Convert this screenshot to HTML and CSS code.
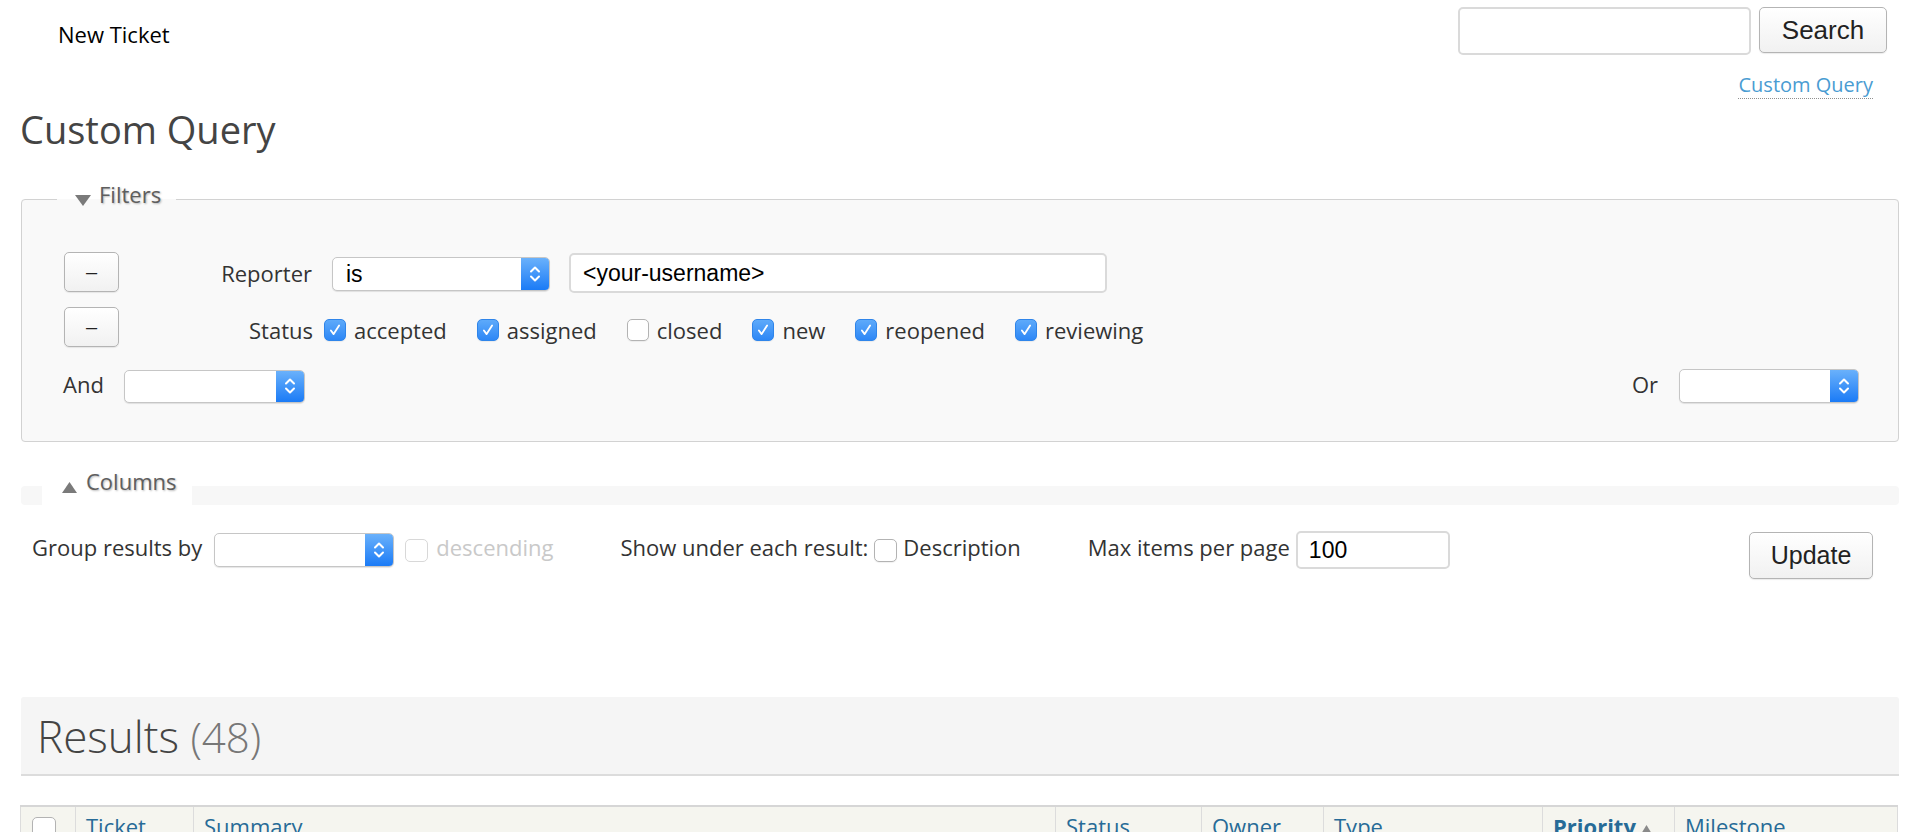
FILE: index.html
```html
<!DOCTYPE html>
<html lang="en">
<head>
<meta charset="utf-8">
<title>Custom Query</title>
<link rel="stylesheet" href="styles.css">
</head>
<body>
<header class="topbar">
  <nav class="mainnav"><a href="#" class="nav-link">New Ticket</a></nav>
  <form class="search">
    <input type="text" class="txt search-input" aria-label="Search">
    <button type="button" class="btn btn-search">Search</button>
  </form>
</header>
<div class="ctxtnav"><a href="#" class="ctx-link">Custom Query</a></div>

<main class="content">
  <h1 class="page-title">Custom Query</h1>

  <fieldset class="filters">
    <legend class="fs-legend fs-legend-filters"><svg class="tri" width="16" height="11" viewBox="0 0 16 11"><polygon points="0,0 16,0 8,11" fill="#7a7a7a"/></svg>Filters</legend>

    <div class="frow frow-reporter">
      <button type="button" class="btn btn-rm">–</button>
      <span class="flabel">Reporter</span>
      <div class="sel sel-mode">
        <span class="sel-val">is</span>
        <span class="stepper"><svg width="12" height="20" viewBox="0 0 12 20"><path d="M2 7.5 L6 3.5 L10 7.5 M2 12.5 L6 16.5 L10 12.5" fill="none" stroke="#fff" stroke-width="2" stroke-linecap="round" stroke-linejoin="round"/></svg></span>
      </div>
      <input type="text" class="txt txt-user" value="&lt;your-username&gt;">
    </div>

    <div class="frow frow-status">
      <button type="button" class="btn btn-rm">–</button>
      <span class="flabel flabel-status">Status</span>
      <div class="checks">
        <label class="chk"><span class="cb cb-on"><svg width="22" height="22" viewBox="0 0 22 22"><path d="M6.5 11.5 L9.5 15.5 L15.5 6" fill="none" stroke="#fff" stroke-width="2" stroke-linecap="round" stroke-linejoin="round"/></svg></span>accepted</label>
        <label class="chk"><span class="cb cb-on"><svg width="22" height="22" viewBox="0 0 22 22"><path d="M6.5 11.5 L9.5 15.5 L15.5 6" fill="none" stroke="#fff" stroke-width="2" stroke-linecap="round" stroke-linejoin="round"/></svg></span>assigned</label>
        <label class="chk"><span class="cb"></span>closed</label>
        <label class="chk"><span class="cb cb-on"><svg width="22" height="22" viewBox="0 0 22 22"><path d="M6.5 11.5 L9.5 15.5 L15.5 6" fill="none" stroke="#fff" stroke-width="2" stroke-linecap="round" stroke-linejoin="round"/></svg></span>new</label>
        <label class="chk"><span class="cb cb-on"><svg width="22" height="22" viewBox="0 0 22 22"><path d="M6.5 11.5 L9.5 15.5 L15.5 6" fill="none" stroke="#fff" stroke-width="2" stroke-linecap="round" stroke-linejoin="round"/></svg></span>reopened</label>
        <label class="chk"><span class="cb cb-on"><svg width="22" height="22" viewBox="0 0 22 22"><path d="M6.5 11.5 L9.5 15.5 L15.5 6" fill="none" stroke="#fff" stroke-width="2" stroke-linecap="round" stroke-linejoin="round"/></svg></span>reviewing</label>
      </div>
    </div>

    <div class="frow frow-andor">
      <div class="andor">
        <span class="andor-label">And</span>
        <div class="sel sel-and">
          <span class="sel-val"></span>
          <span class="stepper"><svg width="12" height="20" viewBox="0 0 12 20"><path d="M2 7.5 L6 3.5 L10 7.5 M2 12.5 L6 16.5 L10 12.5" fill="none" stroke="#fff" stroke-width="2" stroke-linecap="round" stroke-linejoin="round"/></svg></span>
        </div>
      </div>
      <div class="andor">
        <span class="andor-label">Or</span>
        <div class="sel sel-or">
          <span class="sel-val"></span>
          <span class="stepper"><svg width="12" height="20" viewBox="0 0 12 20"><path d="M2 7.5 L6 3.5 L10 7.5 M2 12.5 L6 16.5 L10 12.5" fill="none" stroke="#fff" stroke-width="2" stroke-linecap="round" stroke-linejoin="round"/></svg></span>
        </div>
      </div>
    </div>
  </fieldset>

  <fieldset class="columns">
    <legend class="fs-legend fs-legend-columns"><svg class="tri" width="15" height="11" viewBox="0 0 15 11"><polygon points="0,11 15,11 7.5,0" fill="#7a7a7a"/></svg>Columns</legend>
  </fieldset>

  <div class="options">
    <span class="opt-label">Group results by</span>
    <div class="sel sel-group">
      <span class="sel-val"></span>
      <span class="stepper"><svg width="12" height="20" viewBox="0 0 12 20"><path d="M2 7.5 L6 3.5 L10 7.5 M2 12.5 L6 16.5 L10 12.5" fill="none" stroke="#fff" stroke-width="2" stroke-linecap="round" stroke-linejoin="round"/></svg></span>
    </div>
    <label class="chk chk-desc"><span class="cb cb-disabled"></span>descending</label>
    <span class="opt-label opt-show">Show under each result:</span>
    <label class="chk chk-descr"><span class="cb cb-small"></span>Description</label>
    <span class="opt-label opt-max">Max items per page</span>
    <input type="text" class="txt txt-max" value="100">
    <button type="button" class="btn btn-update">Update</button>
  </div>

  <div class="results-head">
    <h2 class="results-title">Results <span class="numrows">(48)</span></h2>
  </div>

  <table class="listing">
    <colgroup>
      <col class="c-sel"><col class="c-ticket"><col class="c-summary"><col class="c-status"><col class="c-owner"><col class="c-type"><col class="c-priority"><col class="c-milestone">
    </colgroup>
    <thead>
      <tr>
        <th class="th-sel"><span class="cb cb-head"></span></th>
        <th><a href="#">Ticket</a></th>
        <th><a href="#">Summary</a></th>
        <th><a href="#">Status</a></th>
        <th><a href="#">Owner</a></th>
        <th><a href="#">Type</a></th>
        <th class="th-sorted"><a href="#">Priority</a><svg class="sort-arrow" width="11" height="9" viewBox="0 0 11 9"><polygon points="0,9 11,9 5.5,0" fill="#8a8a8a"/></svg></th>
        <th><a href="#">Milestone</a></th>
      </tr>
    </thead>
  </table>
</main>
</body>
</html>
```

FILE: styles.css
```css
* { box-sizing: border-box; }

html { scrollbar-width: none; }
html::-webkit-scrollbar { width: 0; height: 0; }

body {
  margin: 0;
  background: #fff;
  color: #333;
  font-family: "Open Sans", "Liberation Sans", sans-serif;
  font-size: 22px;
  line-height: 30px;
}

/* ---------- generic controls ---------- */
.btn {
  font-family: "Liberation Sans", Arial, sans-serif;
  color: #222;
  background: linear-gradient(#ffffff, #f1f1f1);
  border: 1px solid #b4b4b4;
  border-radius: 5px;
  box-shadow: 0 1px 1px rgba(0, 0, 0, 0.08);
  padding: 0;
  margin: 0;
  cursor: pointer;
}

.txt {
  font-family: "Liberation Sans", Arial, sans-serif;
  font-size: 23px;
  color: #000;
  background: #fff;
  border: 2px solid #dadada;
  border-radius: 5px;
  margin: 0;
  outline: none;
}

.sel {
  display: flex;
  align-items: stretch;
  background: #fff;
  border: 1px solid #c6c6c6;
  border-radius: 5px;
  box-shadow: 0 1px 1px rgba(0, 0, 0, 0.1);
  overflow: hidden;
  flex: none;
}
.sel-val {
  flex: 1;
  font-family: "Liberation Sans", Arial, sans-serif;
  font-size: 23px;
  color: #000;
  padding-left: 13px;
  display: flex;
  align-items: center;
}
.stepper {
  width: 28px;
  flex: none;
  display: flex;
  align-items: center;
  justify-content: center;
  background: linear-gradient(#6ab1fb, #1b7bf6);
}

.chk {
  display: flex;
  align-items: center;
  white-space: nowrap;
}
.cb {
  width: 22px;
  height: 22px;
  flex: none;
  display: inline-flex;
  align-items: center;
  justify-content: center;
  margin-right: 8px;
  border-radius: 5px;
  background: #fff;
  border: 1px solid #b3b3b3;
  box-shadow: 0 1px 1px rgba(0, 0, 0, 0.06);
}
.cb-on {
  background: linear-gradient(#5eaafa, #2d87f6);
  border-color: #2f85ea;
}
.cb-on svg { display: block; }

/* ---------- top bar ---------- */
.topbar {
  display: flex;
  justify-content: space-between;
  align-items: flex-start;
  padding: 7px 29px 0 58px;
}
.mainnav { margin-top: 12px; }
.nav-link { color: #000; text-decoration: none; }

.search {
  display: flex;
  align-items: flex-start;
  gap: 8px;
  margin: 0;
}
.search-input {
  width: 293px;
  height: 48px;
}
.btn-search {
  width: 128px;
  height: 46px;
  font-size: 26px;
}

.ctxtnav {
  margin-top: 16px;
  text-align: right;
  padding-right: 43px;
  font-size: 20px;
  line-height: 27px;
}
.ctx-link {
  color: #4a9cd2;
  text-decoration: none;
  border-bottom: 1px dotted #8f8f8f;
}

/* ---------- content ---------- */
.content {
  padding: 0 17px 0 21px;
}

.page-title {
  margin: 5px 0 0 -1px;
  font-size: 38px;
  line-height: 52px;
  font-weight: 400;
  color: #444;
}

fieldset { margin: 0; min-width: 0; }

.fs-legend {
  color: #5e5e5e;
  line-height: 30px;
  padding: 0 15px 10px 18px;
  text-shadow: 1px 1px 2px rgba(0, 0, 0, 0.28);
  white-space: nowrap;
}
.fs-legend .tri {
  vertical-align: -3px;
  margin-right: 8px;
}
.fs-legend-filters { margin-left: -7px; }
.fs-legend-columns {
  background: #fff;
  margin-left: 21px;
  padding-left: 20px;
  padding-right: 16px;
  padding-bottom: 9px;
}
.fs-legend-columns .tri { margin-right: 9px; }

.filters {
  margin-top: 24px;
  border: 1px solid #d2d2d2;
  border-radius: 4px;
  background: #f9f9f9;
  padding: 32px 39px 38px 42px;
}

.frow {
  display: flex;
  align-items: center;
}
.frow-reporter { height: 42px; }
.frow-status { height: 40px; margin-top: 14px; }
.frow-andor {
  height: 34px;
  margin-top: 22px;
  justify-content: space-between;
}

.btn-rm {
  width: 55px;
  height: 40px;
  font-size: 20px;
  flex: none;
}

.flabel {
  width: 193px;
  text-align: right;
  flex: none;
  margin-top: 2px;
}
.flabel-status {
  width: 194px;
  margin-top: 6px;
}

.sel-mode {
  width: 218px;
  height: 34px;
  margin-left: 20px;
  margin-top: 3px;
}
.txt-user {
  width: 538px;
  height: 40px;
  margin-left: 19px;
  padding: 0 0 0 12px;
  margin-top: 2px;
}

.checks {
  display: flex;
  align-items: center;
  gap: 30px;
  margin-left: 11px;
  margin-top: 6px;
}

.andor {
  display: flex;
  align-items: center;
}
.andor-label { margin-left: -1px; margin-bottom: 5px; }
.sel-and {
  width: 181px;
  height: 33px;
  margin-left: 20px;
}
.sel-or {
  width: 180px;
  height: 34px;
  margin-left: 21px;
}

.columns {
  margin-top: 24px;
  border: 0;
  padding: 0;
  background: #f7f7f7;
  border-radius: 4px;
}

/* ---------- options row ---------- */
.options {
  display: flex;
  align-items: center;
  height: 38px;
  margin-top: 26px;
  padding: 0 26px 0 11px;
}
.opt-label { white-space: nowrap; margin-bottom: 6px; }
.sel-group {
  width: 180px;
  height: 34px;
  margin-left: 12px;
}
.chk-desc { margin-left: 11px; color: #c9c9c9; margin-bottom: 6px; }
.chk-desc .cb, .chk-descr .cb { margin-top: 6px; }
.cb-disabled {
  width: 23px;
  height: 23px;
  border-color: #d8d8d8;
  box-shadow: none;
  margin-right: 8px;
}
.opt-show { margin-left: 67px; }
.chk-descr { margin-left: 6px; margin-bottom: 6px; }
.cb-small {
  width: 23px;
  height: 23px;
  margin-right: 6px;
}
.opt-max { margin-left: 67px; }
.txt-max {
  width: 154px;
  height: 38px;
  margin-left: 6px;
  padding: 0 0 0 11px;
}
.btn-update {
  margin-left: auto;
  align-self: flex-start;
  margin-top: 1px;
  width: 124px;
  height: 47px;
  font-size: 25px;
}

/* ---------- results ---------- */
.results-head {
  margin-top: 128px;
  background: #f5f5f5;
  border-bottom: 2px solid #dcdcdc;
  border-radius: 3px 3px 0 0;
  padding: 9px 0 7px 16px;
}
.results-title {
  margin: 0;
  font-size: 44px;
  line-height: 60px;
  font-weight: 300;
  color: #444;
}
.numrows { color: #777; font-size: 42px; }

.listing {
  margin: 29px 0 0 -1px;
  width: 1877px;
  border-collapse: collapse;
  table-layout: fixed;
  border: 1px solid #dcdcdc;
  border-top: 2px solid #d6d6d6;
}
.c-sel { width: 55px; }
.c-ticket { width: 118px; }
.c-summary { width: 862px; }
.c-status { width: 146px; }
.c-owner { width: 122px; }
.c-type { width: 219px; }
.c-priority { width: 132px; }
.c-milestone { width: 223px; }

.listing th {
  background: #f5f5ef;
  border-left: 1px solid #dcdcdc;
  text-align: left;
  font-weight: 400;
  padding: 4px 10px 6px 10px;
  white-space: nowrap;
  vertical-align: top;
}
.listing th a {
  color: #276b97;
  text-decoration: none;
}
.th-sel { padding-left: 11px !important; padding-top: 10px !important; }
.cb-head {
  width: 24px;
  height: 24px;
  margin: 0;
}
.th-sorted a { font-weight: 700; }
.sort-arrow { margin-left: 5px; vertical-align: 1px; }
```
